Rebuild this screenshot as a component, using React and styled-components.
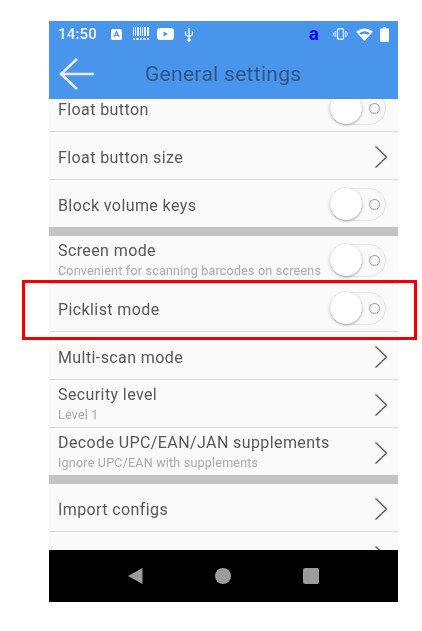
import React from "react";
import styled, { createGlobalStyle } from "styled-components";

const GlobalStyle = createGlobalStyle`
  html, body {
    margin: 0;
    padding: 0;
    background: #fff;
    font-family: Roboto, "Liberation Sans", sans-serif;
  }
`;

const Page = styled.div`
  position: relative;
  width: 422px;
  height: 631px;
  padding: 21px 0 0 49px;
  box-sizing: border-box;
  overflow: hidden;
`;
const Phone = styled.div`
  width: 349px;
  height: 581px;
  display: flex;
  flex-direction: column;
  overflow: hidden;
  filter: blur(0.35px);
`;
const Top = styled.div`
  flex: none;
  height: 78px;
  background: #4a95ec;
  display: flex;
  flex-direction: column;
`;
const StatusBar = styled.div`
  height: 26px;
  display: flex;
  align-items: center;
  padding: 0 9px;
  color: #fff;
`;
const Time = styled.span`
  font-size: 15px;
  font-weight: 500;
  color: #f2f6fc;
  letter-spacing: 0.2px;
`;
const StatusLeft = styled.div`
  display: flex;
  align-items: center;
  flex: 1;
`;
const StatusRight = styled.div`
  display: flex;
  align-items: center;
`;
const Slot = styled.div`
  display: flex;
  margin-left: ${(p) => p.$gap}px;
`;
const AmazonA = styled.span`
  font-size: 19px;
  font-weight: 700;
  color: #0a0aee;
  line-height: 1;
  position: relative;
  top: -1px;
`;
const TitleBar = styled.div`
  flex: 1;
  display: flex;
  align-items: center;
  padding: 2px 0 0 10px;
`;
const Title = styled.h1`
  margin: 0 0 0 50px;
  font-size: 21px;
  font-weight: 400;
  color: #2f5587;
  letter-spacing: 0.3px;
`;
const Scroller = styled.div`
  flex: 1;
  min-height: 0;
  overflow: hidden;
  background: #fafafa;
`;
const List = styled.div`
  margin-top: -15px;
`;
const Row = styled.div`
  height: ${(p) => (p.$last ? 47 : 48)}px;
  box-sizing: border-box;
  display: flex;
  align-items: center;
  justify-content: space-between;
  padding: 0 10px 0 9px;
  border-bottom: ${(p) => (p.$last ? "none" : "1px solid #d9d9d9")};
`;
const Labels = styled.div`
  display: flex;
  flex-direction: column;
  min-width: 0;
  padding-top: ${(p) => (p.$two ? 0 : 4)}px;
`;
const Label = styled.div`
  font-size: 16px;
  line-height: 20px;
  color: #585858;
  letter-spacing: 0.4px;
  white-space: nowrap;
`;
const Sub = styled.div`
  margin-top: 2px;
  font-size: 12.5px;
  line-height: 16px;
  color: #a9a9a9;
  letter-spacing: 0.22px;
  white-space: nowrap;
`;
const Band = styled.div`
  height: 9px;
  background: #c4c4c4;
`;
const Side = styled.div`
  display: flex;
  margin-top: 2px;
`;
const Track = styled.div`
  position: relative;
  width: 56px;
  height: 33px;
  box-sizing: border-box;
  margin-right: 2px;
  border: 1px solid #e4e4e4;
  border-radius: 17px;
  background: #fafafa;
`;
const Knob = styled.div`
  position: absolute;
  left: -1px;
  top: -1px;
  width: 32px;
  height: 32px;
  border-radius: 50%;
  background: #fff;
  box-shadow: 0 1px 3px rgba(0, 0, 0, 0.35);
`;
const Dot = styled.div`
  position: absolute;
  right: 5px;
  top: 10px;
  width: 11px;
  height: 11px;
  box-sizing: border-box;
  border: 1.5px solid #9a9a9a;
  border-radius: 50%;
`;
const NavBar = styled.div`
  flex: none;
  height: 52px;
  background: #000;
  display: flex;
  align-items: center;
  padding: 0 79px 0 78px;
  justify-content: space-between;
`;
const Highlight = styled.div`
  position: absolute;
  left: 22px;
  top: 280px;
  width: 395px;
  height: 60px;
  box-sizing: border-box;
  border: 3px solid #f00000;
  pointer-events: none;
`;

const Chevron = () => (
  <svg width="14" height="24" viewBox="0 0 14 24" fill="none">
    <path d="M1.5 1.5 L12.5 12 L1.5 22.5" stroke="#5c5c5c" strokeWidth="1.4" />
  </svg>
);

const Toggle = () => (
  <Track>
    <Knob />
    <Dot />
  </Track>
);

const BackArrow = () => (
  <svg width="36" height="34" viewBox="0 0 36 34" fill="none">
    <path d="M18 2 L2 17 L18 32 M2 17 H35" stroke="#ecebe6" strokeWidth="2.6" />
  </svg>
);

const NotifA = () => (
  <svg width="11" height="11" viewBox="0 0 11 11">
    <rect width="11" height="11" rx="1.5" fill="#fff" />
    <path d="M3 8 L5.5 2.5 L8 8 M4 6.4 H7" stroke="#4a95ec" strokeWidth="1.2" fill="none" />
  </svg>
);

const Barcode = () => (
  <svg width="16" height="14" viewBox="0 0 16 14" fill="#fff">
    <path d="M0 0h1v9H0zM2 0h1v9H2zM4 0h2v9H4zM7 0h1v9H7zM9 0h1v9H9zM11 0h2v9h-2zM14 0h2v9h-2z" opacity="0.85" />
    <path d="M0 11h2v2H0zM3 11h3v2H3zM7 11h2v2H7zM10 11h3v2h-3zM14 11h2v2h-2z" opacity="0.7" />
  </svg>
);

const YouTube = () => (
  <svg width="17" height="12" viewBox="0 0 17 12">
    <rect width="17" height="12" rx="3" fill="#fff" />
    <path d="M6.5 3.5 L11 6 L6.5 8.5 Z" fill="#4a95ec" />
  </svg>
);

const Usb = () => (
  <svg width="10" height="15" viewBox="0 0 10 15" fill="none" stroke="#fff" strokeWidth="1.2">
    <path d="M5 1 V14 M1.500 4 V7 Q1.500 8.500 5 9.500 Q8.500 8.500 8.500 7 V4" />
    <circle cx="5" cy="13" r="1.2" fill="#fff" />
  </svg>
);

const Vibrate = () => (
  <svg width="15" height="12" viewBox="0 0 15 12" fill="none" stroke="#dbe8fa">
    <rect x="4.5" y="0.8" width="6" height="10.4" rx="1.5" strokeWidth="1.5" />
    <path d="M2.2 3 V9 M12.8 3 V9 M0.5 4.5 V7.5 M14.5 4.5 V7.5" strokeWidth="1.1" />
  </svg>
);

const Wifi = () => (
  <svg width="17" height="13" viewBox="0 0 17 13">
    <path d="M0 3.8 Q8.5 -3 17 3.8 L8.5 13 Z" fill="#fff" />
    <path d="M3.4 5 Q8.5 1.4 13.6 5 L12 6.8 Q8.5 4.5 5 6.8 Z" fill="#4a95ec" />
  </svg>
);

const Battery = () => (
  <svg width="9" height="15" viewBox="0 0 9 15" fill="#fff">
    <path d="M3 0h3v1.500h2a1 1 0 0 1 1 1V14a1 1 0 0 1-1 1H1a1 1 0 0 1-1-1V2.500a1 1 0 0 1 1-1h2z" />
  </svg>
);

const rows = [
  { label: "Float button", toggle: true },
  { label: "Float button size" },
  { label: "Block volume keys", toggle: true, end: true },
  { label: "Screen mode", sub: "Convenient for scanning barcodes on screens", toggle: true },
  { label: "Picklist mode", toggle: true },
  { label: "Multi-scan mode" },
  { label: "Security level", sub: "Level 1" },
  { label: "Decode UPC/EAN/JAN supplements", sub: "Ignore UPC/EAN with supplements", end: true },
  { label: "Import configs" },
  { label: "Export configs" },
];

export default function App() {
  return (
    <Page>
      <GlobalStyle />
      <Phone>
        <Top>
          <StatusBar>
            <StatusLeft>
              <Time>14:50</Time>
              <Slot $gap={14}><NotifA /></Slot>
              <Slot $gap={11}><Barcode /></Slot>
              <Slot $gap={8}><YouTube /></Slot>
              <Slot $gap={10}><Usb /></Slot>
            </StatusLeft>
            <StatusRight>
              <Slot $gap={0}><AmazonA>a</AmazonA></Slot>
              <Slot $gap={14}><Vibrate /></Slot>
              <Slot $gap={8}><Wifi /></Slot>
              <Slot $gap={7}><Battery /></Slot>
            </StatusRight>
          </StatusBar>
          <TitleBar>
            <BackArrow />
            <Title>General settings</Title>
          </TitleBar>
        </Top>
        <Scroller>
          <List>
            {rows.map((r) => (
              <React.Fragment key={r.label}>
                <Row $last={r.end}>
                  <Labels $two={!!r.sub}>
                    <Label>{r.label}</Label>
                    {r.sub && <Sub>{r.sub}</Sub>}
                  </Labels>
                  <Side>{r.toggle ? <Toggle /> : <Chevron />}</Side>
                </Row>
                {r.end && <Band />}
              </React.Fragment>
            ))}
          </List>
        </Scroller>
        <NavBar>
          <svg width="16" height="18" viewBox="0 0 16 18">
            <path d="M15.500 1 V17 L1 9 Z" fill="#9b9b9b" />
          </svg>
          <svg width="16" height="16" viewBox="0 0 16 16">
            <circle cx="8" cy="8" r="8" fill="#9b9b9b" />
          </svg>
          <svg width="16" height="16" viewBox="0 0 16 16">
            <rect width="16" height="16" rx="2" fill="#9b9b9b" />
          </svg>
        </NavBar>
      </Phone>
      <Highlight />
    </Page>
  );
}
